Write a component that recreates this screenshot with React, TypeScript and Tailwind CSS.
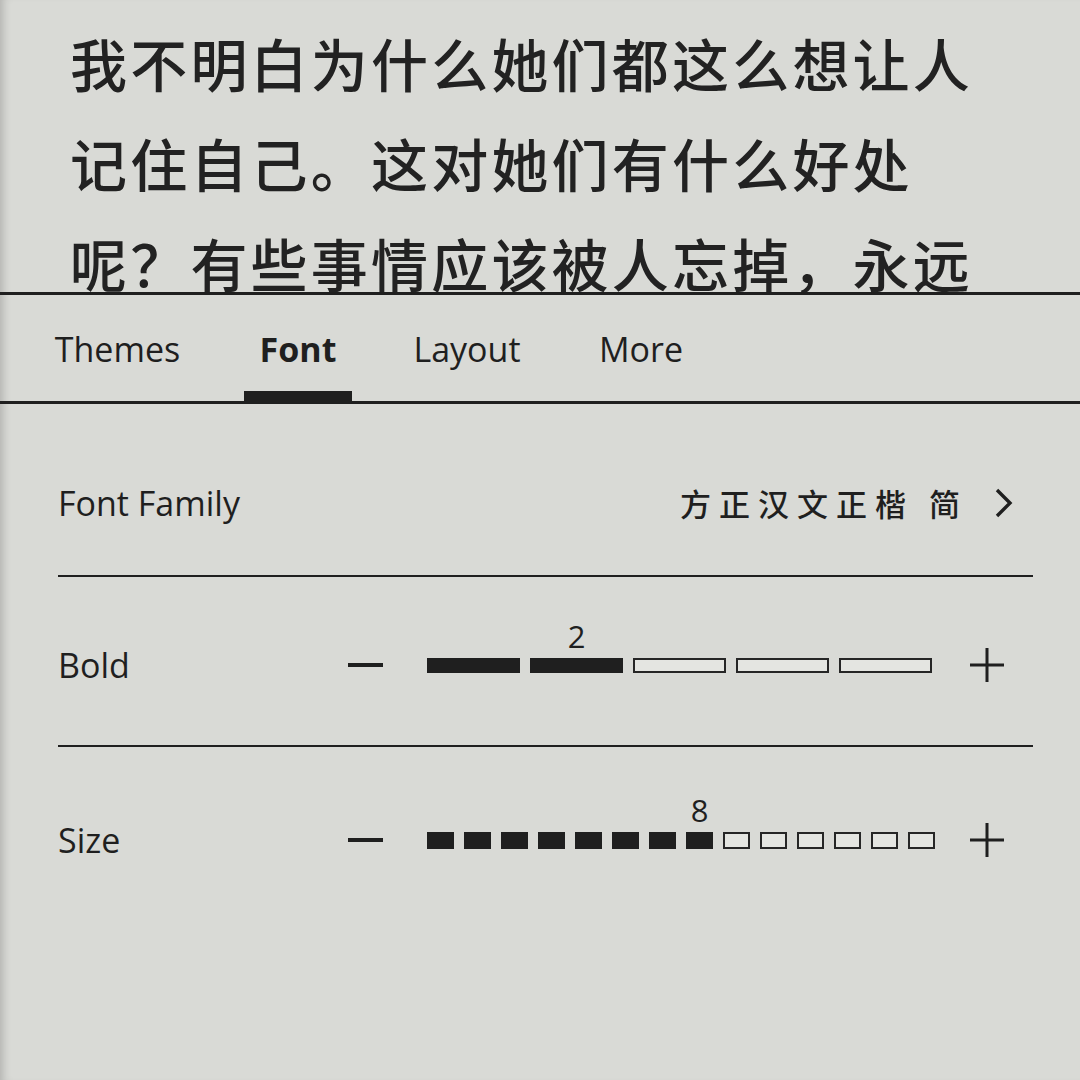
import React from "react";

const ink = "bg-[#1f1f1f]";

function Minus() {
  return (
    <svg width="35" height="8" viewBox="0 0 35 8" className="shrink-0">
      <rect x="0" y="2" width="35" height="4" fill="#1f1f1f" />
    </svg>
  );
}

function Plus() {
  return (
    <svg width="34" height="34" viewBox="0 0 34 34" className="shrink-0">
      <rect x="0" y="15.5" width="34" height="3" fill="#1f1f1f" />
      <rect x="15.5" y="0" width="3" height="34" fill="#1f1f1f" />
    </svg>
  );
}

function Chevron() {
  return (
    <svg width="20" height="30" viewBox="0 0 20 30" className="shrink-0">
      <polyline points="3,2 16,15 3,28" fill="none" stroke="#1f1f1f" strokeWidth="3.4" />
    </svg>
  );
}

function Stepper({
  count,
  value,
  cell,
}: {
  count: number;
  value: number;
  cell: string;
}) {
  return (
    <div className="flex gap-[10px]">
      {Array.from({ length: count }).map((_, i) => (
        <div
          key={i}
          className={
            "relative " +
            cell +
            " " +
            (i < value ? ink : "border-2 border-[#262626] bg-[#e4e5e1]")
          }
        >
          {i === value - 1 && (
            <span className="absolute left-1/2 -translate-x-1/2 bottom-[calc(100%+6px)] text-[31px] leading-[31px] text-[#1f1f1f]">
              {value}
            </span>
          )}
        </div>
      ))}
    </div>
  );
}

const tabs = [
  { label: "Themes", w: "w-[161px]", ml: "ml-[37px]", active: false },
  { label: "Font", w: "w-[108px]", ml: "ml-[46px]", active: true },
  { label: "Layout", w: "w-[144px]", ml: "ml-[43px]", active: false },
  { label: "More", w: "w-[116px]", ml: "ml-[44px]", active: false },
];

export default function App() {
  return (
    <main
      className="w-[1080px] h-[1080px] overflow-hidden bg-[#d9dad6] text-[#1f1f1f] shadow-[inset_9px_0_8px_-6px_rgba(0,0,0,0.18)]"
      style={{ fontFamily: '"Open Sans", "Noto Sans", sans-serif' }}
    >
      {/* Reading page, last line runs under the settings sheet */}
      <section
        className="h-[292px] overflow-hidden pl-[70px] pt-[12px] text-[57px] leading-[100px] tracking-[3.2px] font-medium text-[#222]"
        style={{ fontFamily: '"Noto Sans CJK SC", sans-serif' }}
      >
        <p className="whitespace-nowrap">我不明白为什么她们都这么想让人</p>
        <p className="whitespace-nowrap">记住自己。这对她们有什么好处</p>
        <p className="whitespace-nowrap">呢？有些事情应该被人忘掉，永远</p>
      </section>
      <div className={"h-[3px] " + ink} />

      {/* Tabs */}
      <nav className="h-[106px] flex items-end">
        {tabs.map((t) => (
          <div key={t.label} className={"flex flex-col items-center " + t.w + " " + t.ml}>
            <span
              className={
                "text-[34px] leading-[40px] mb-[22px] whitespace-nowrap " +
                (t.active ? "font-bold" : "font-normal")
              }
            >
              {t.label}
            </span>
            <div className={"h-[10px] w-full " + (t.active ? ink : "")} />
          </div>
        ))}
      </nav>
      <div className={"h-[3px] " + ink} />

      {/* Settings */}
      <section className="pl-[58px] pr-[47px]">
        <div className="h-[171px] pt-[27px] flex items-center justify-between">
          <span className="text-[34px]">Font Family</span>
          <div className="flex items-center">
            <span
              className="text-[31px] font-medium tracking-[8px]"
              style={{ fontFamily: '"Noto Sans CJK SC", sans-serif' }}
            >
              方正汉文正楷 简
            </span>
            <span className="ml-[26px] mr-[19px] flex">
              <Chevron />
            </span>
          </div>
        </div>
        <div className={"h-[2px] " + ink} />

        <div className="h-[168px] pt-[8px] flex items-center">
          <span className="w-[290px] text-[34px]">Bold</span>
          <Minus />
          <div className="ml-[44px]">
            <Stepper count={5} value={2} cell="w-[93px] h-[15px]" />
          </div>
          <div className="ml-[38px] flex">
            <Plus />
          </div>
        </div>
        <div className={"h-[2px] " + ink} />

        <div className="h-[170px] pt-[16px] flex items-center">
          <span className="w-[290px] text-[34px]">Size</span>
          <Minus />
          <div className="ml-[44px]">
            <Stepper count={14} value={8} cell="w-[27px] h-[17px]" />
          </div>
          <div className="ml-[35px] flex">
            <Plus />
          </div>
        </div>
      </section>
    </main>
  );
}
